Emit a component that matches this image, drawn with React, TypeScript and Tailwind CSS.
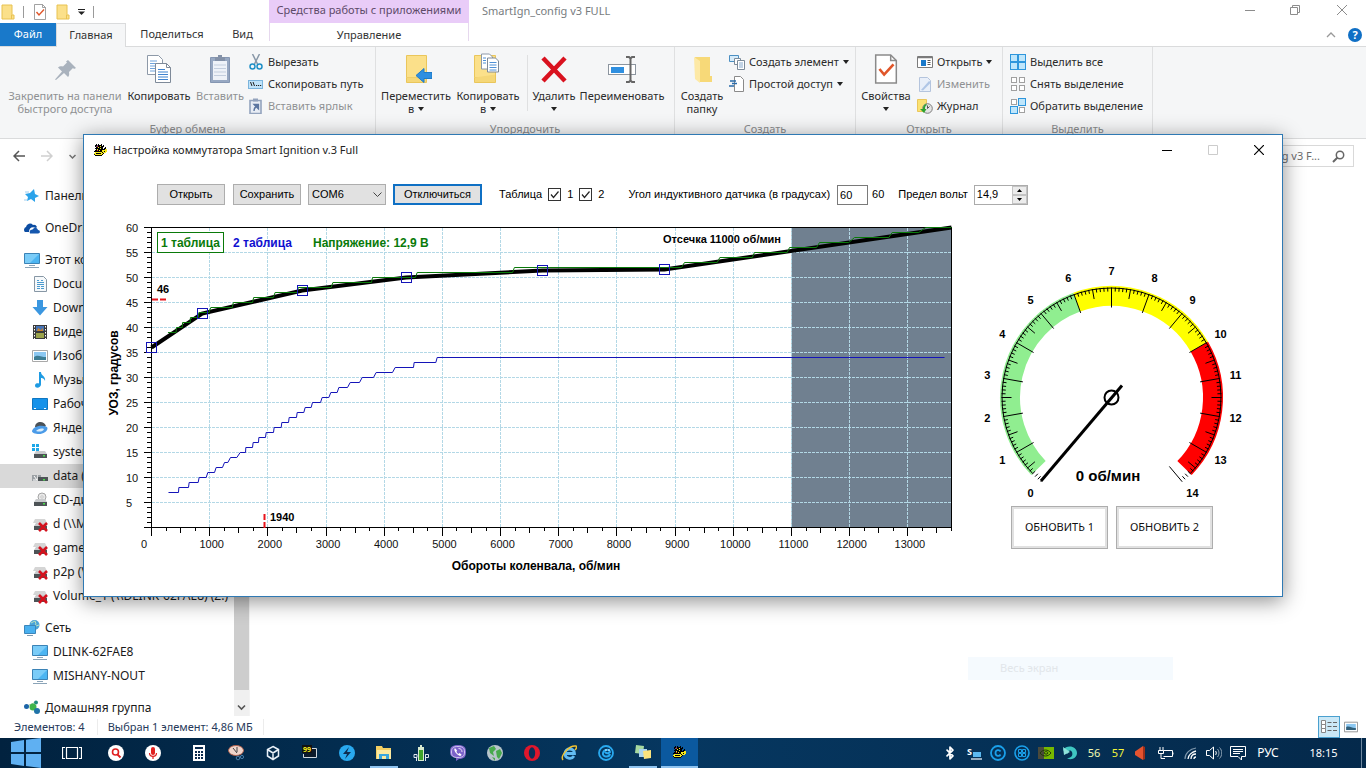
import React from 'react';
import { Bluetooth } from 'lucide-react';

type Point = [number, number];
// [degrees, rpm from, rpm to]
type Step = [number, number, number];

const curve: Point[] = [
  [0, 36], [870, 42.8], [2590, 47.4], [4375, 50], [6720, 51.4], [8815, 51.6], [13750, 60],
];

const tableOne: Step[] = [
  [39, 283, 423], [40, 428, 528], [41, 534, 663], [42, 670, 804], [43, 814, 988], [44, 1019, 1388],
  [45, 1406, 1737], [46, 1756, 2094], [47, 2124, 2504], [48, 2523, 3088], [49, 3118, 3781],
  [50, 3799, 4536], [51, 4566, 6206], [52, 6237, 9110], [53, 9161, 9723], [54, 9768, 10325],
  [55, 10364, 10926], [56, 10966, 11430], [57, 11482, 11985], [58, 12083, 12673],
  [59, 12731, 13188], [60, 13303, 13750],
];

const tableTwo: Step[] = [
  [7, 292, 464], [8, 470, 636], [9, 647, 802], [10, 819, 940], [11, 968, 1083], [12, 1111, 1220],
  [13, 1255, 1312], [14, 1358, 1467], [15, 1524, 1616], [16, 1621, 1736], [17, 1747, 1839],
  [18, 1845, 1959], [19, 1971, 2097], [20, 2108, 2229], [21, 2240, 2355], [22, 2366, 2492],
  [23, 2504, 2618], [24, 2641, 2744], [25, 2767, 2905], [26, 2933, 3048], [27, 3082, 3191],
  [28, 3220, 3369], [29, 3415, 3575], [30, 3621, 3816], [31, 3861, 4142], [32, 4188, 4503],
  [33, 4514, 4887], [34, 4910, 13630],
];

const px = (rpm: number) => 67.5 + (rpm * 800) / 13750;
const py = (deg: number) => 307.5 - deg * 5;
const toPoints = (pts: Point[]) => pts.map(([x, y]) => `${px(x)},${py(y)}`).join(' ');
const stepPoints = (steps: Step[]) =>
  toPoints(steps.flatMap(([d, a, b]): Point[] => [[a, d], [b, d]]));

const range = (n: number) => Array.from({ length: n }, (_, i) => i);

/* ---------- Icons ---------- */

type IconProps = { size?: number; box?: string; children: React.ReactNode; className?: string };

function Svg({ size = 16, box = '0 0 16 16', children, className = '' }: IconProps) {
  return (
    <svg width={size} height={size} viewBox={box} fill="none" className={`shrink-0 ${className}`} aria-hidden="true">
      {children}
    </svg>
  );
}

const enginePixels = [
  '..k.k..k.....',
  '.kkbkkkk.k...',
  '.kbrkkykkk...',
  '..kkykkkk..k.',
  '.kkkkkykk.kk.',
  '..kykkkkkkkyy',
  '.kkrkykkyyyyy',
  'kkkkkkkkyykyy',
  '.yyyyyyykyyy.',
  'yykkkkkyyk...',
  'kyyyyyyyk....',
  '.kkkkkkk.....',
];
const pixelColors: Record<string, string> = { k: '#000', y: '#f7ea1c', r: '#c33', b: '#5a4a80' };

function EngineIcon() {
  return (
    <Svg size={13} box="0 0 13 13">
      {enginePixels.map((row, y) =>
        row.split('').map((c, x) =>
          c === '.' ? null : <rect key={`${x}-${y}`} x={x} y={y} width="1" height="1" fill={pixelColors[c]} />,
        ),
      )}
    </Svg>
  );
}

function FolderIcon({ size = 16 }: { size?: number }) {
  return (
    <Svg size={size}>
      <path d="M2 1h10v10h2v4H2z" fill="#fbe08a" stroke="#e8c251" />
      <path d="M11.5 11v4" stroke="#e8c251" />
    </Svg>
  );
}

function CheckSheetIcon({ size = 16 }: { size?: number }) {
  return (
    <Svg size={size}>
      <path d="M2.5.5h8l3 3v12h-11z" fill="#fff" stroke="#8a8a8a" strokeWidth=".8" />
      <path d="M10.5.5v3h3" stroke="#8a8a8a" strokeWidth=".8" />
      <path d="M4.5 8l2.500 3 5-5.500" stroke="#e0562a" strokeWidth="1.400" />
    </Svg>
  );
}

function PinIcon() {
  return (
    <Svg size={28} box="0 0 28 28">
      <path d="M17 5l8 8-2 1-1-1-4 4c.5 3 0 4-1 5l-4-4-8 7-1-.5 7-8-4-4c1-1 3-1.500 5-1l4-4-1-1z" fill="#a9b2bd" />
    </Svg>
  );
}

function SheetsIcon({ size = 32 }: { size?: number }) {
  return (
    <Svg size={size} box="0 0 32 32">
      <path d="M4.500 2.500h11l4 4v15h-15z" fill="#fff" stroke="#8d99a8" />
      <path d="M7 8h7M7 10.500h9M7 13h9M7 15.500h9M7 18h9" stroke="#6ea3dc" />
      <path d="M12.500 10.500h11l4 4v15h-15z" fill="#fff" stroke="#7e8a99" />
      <path d="M23.500 10.500v4h4" stroke="#7e8a99" />
      <path d="M15 16.500h7M15 19h10M15 21.500h10M15 24h10M15 26.500h10" stroke="#3f83cf" />
    </Svg>
  );
}

function ClipboardIcon() {
  return (
    <Svg size={32} box="0 0 32 32">
      <path d="M6.500 4.500h19v25h-19z" fill="#97a8c2" stroke="#8596b2" />
      <path d="M9 8h14v19H9z" fill="#eef2f8" />
      <path d="M10 12h12M10 15.500h12M10 19h12M10 22.500h12" stroke="#c3cede" />
      <path d="M11 4h3V2h4v2h3v4H11z" fill="#8391a8" />
    </Svg>
  );
}

function ScissorsIcon() {
  return (
    <Svg>
      <path d="M4.500 0l5 10M11.500 0l-5 10" stroke="#8998a8" strokeWidth="1.500" />
      <circle cx="4.500" cy="12.500" r="2.500" stroke="#1f8fc6" strokeWidth="1.500" />
      <circle cx="11.500" cy="12.500" r="2.500" stroke="#1f8fc6" strokeWidth="1.500" />
    </Svg>
  );
}

function PathIcon() {
  return (
    <Svg>
      <rect x=".5" y="4.500" width="14" height="8" fill="#bfe3fa" stroke="#7bb4dc" />
      <path d="M2.500 6l1.500 4M5 6l1.500 4M8 9.500h1.200M10 9.500h1.200M12 9.500h1.200" stroke="#222" />
    </Svg>
  );
}

function ShortcutIcon() {
  return (
    <Svg>
      <path d="M2 2.500h11v13H2z" fill="#e8edf5" stroke="#93a3bd" strokeWidth="1.600" />
      <path d="M5 .5h5v3H5z" fill="#93a3bd" />
      <path d="M6 6.500h4.500v4.500zM9 8c-2.500 1-3 2.500-3 5" fill="#5c76a0" stroke="#5c76a0" strokeWidth="1.300" />
    </Svg>
  );
}

function MoveToIcon() {
  return (
    <Svg size={32} box="0 0 32 32">
      <path d="M6.500 2.500h20v22h-20z" fill="#fbe08a" stroke="#eac65b" />
      <path d="M6.500 24.500v5h20v-5" fill="#f5d778" stroke="#eac65b" />
      <path d="M16 22.500l8-7v4h8v6h-8v4z" fill="#2f8fe0" stroke="#1f7bc8" />
    </Svg>
  );
}

function CopyToIcon() {
  return (
    <Svg size={32} box="0 0 32 32">
      <path d="M2.500 2.500h21v22h-21z" fill="#fbe08a" stroke="#eac65b" />
      <path d="M2.500 24.500v5h21v-8" fill="#f5d778" stroke="#eac65b" />
      <path d="M9.500 1h8l3 3v12h-11z" fill="#fff" stroke="#8d99a8" />
      <path d="M15.500 5h8l3 3v11h-11z" fill="#fff" stroke="#7e8a99" />
      <path d="M11 5h3M11 7.500h3M11 10h3M17.500 9.500h7M17.500 12h7M17.500 14.500h7M17.500 17h7" stroke="#4e90d6" />
    </Svg>
  );
}

function DeleteIcon() {
  return (
    <Svg size={32} box="0 0 32 32">
      <path d="M5 5l22 23M27 5L5 28" stroke="#d9121f" strokeWidth="4.500" />
    </Svg>
  );
}

function RenameIcon() {
  return (
    <Svg size={32} box="0 0 32 32">
      <rect x="2.500" y="11.500" width="27" height="10" fill="#fff" stroke="#8c959f" />
      <path d="M5 14h13v6H5z" fill="#2f8fe0" />
      <path d="M20 4h3l1.500 1.500L26 4h3M24.500 5v23M20 29h3l1.500-1.500L26 29h3" stroke="#666" strokeWidth="2" />
    </Svg>
  );
}

function NewFolderIcon() {
  return (
    <Svg size={32} box="0 0 32 32">
      <path d="M9 4h15v19h2v6H13z" fill="#f7d978" />
      <path d="M8 4l6 4v22l-5-4z" fill="#fde9a6" />
    </Svg>
  );
}

function NewItemIcon() {
  return (
    <Svg>
      <path d="M.5 1.500h9v6h-9z" fill="#d7ecfa" stroke="#4b8fc2" />
      <path d="M5.500 4.500h6v6h-6z" fill="#fff" stroke="#7d8b99" />
      <path d="M8.500 6.500h7v9h-7z" fill="#fff" stroke="#7d8b99" />
      <path d="M10 9h4M10 11h4M10 13h4" stroke="#86a9cc" />
    </Svg>
  );
}

function EasyAccessIcon() {
  return (
    <Svg>
      <path d="M5.5.5h6l3 3v12h-9z" fill="#fff" stroke="#8a8a8a" />
      <path d="M1 5h6M3 7.500h5M0 10h5" stroke="#2b6cab" strokeWidth="1.300" />
    </Svg>
  );
}

function OpenIcon() {
  return (
    <Svg>
      <path d="M.5 2.500h15v11H.5z" fill="#fff" stroke="#7b7b7b" />
      <path d="M1 3.500h14" stroke="#7b7b7b" strokeWidth="1.500" />
      <path d="M4 6h5v6H4z" fill="#1979ca" />
      <path d="M10.500 6.500h3M10.500 8.500h3M10.500 10.500h3" stroke="#555" />
    </Svg>
  );
}

function EditIcon() {
  return (
    <Svg>
      <path d="M2.500 1.500h8l3 3v11h-11z" fill="#e9eff9" stroke="#b4c4dd" />
      <path d="M4 14l8-9 2 1.500-8 8z" fill="#b0c6e6" />
    </Svg>
  );
}

function HistoryIcon() {
  return (
    <Svg>
      <path d="M.5 1.500h9v12h-9z" fill="#fbe272" stroke="#eac65b" />
      <circle cx="10.500" cy="10.500" r="4.800" fill="#e4e4e4" stroke="#7e7e7e" />
      <path d="M10.500 7.500v3l2-2" stroke="#555" />
      <path d="M9 6a5 5 0 0 0-3 5H3l4 4 2.500-4H8c0-2 0-3 2-4z" fill="#2fa32f" />
    </Svg>
  );
}

function SquaresIcon({ filled }: { filled: boolean[] }) {
  return (
    <Svg>
      {filled.map((on, i) => (
        <rect
          key={i}
          x={(i % 2) * 8 + (on ? 0.5 : 1.5)}
          y={Math.floor(i / 2) * 8 + (on ? 0.5 : 1.5)}
          width={on ? 7 : 5}
          height={on ? 7 : 5}
          fill={on ? '#bfe6fb' : '#fff'}
          stroke={on ? '#2e96dc' : '#a0a0a0'}
        />
      ))}
    </Svg>
  );
}

function MonitorIcon() {
  return (
    <Svg>
      <path d="M.5 1.500h15v10H.5z" fill="#4cb5f2" stroke="#3b83b6" />
      <path d="M1 2h14L6 11H1z" fill="#7accf8" />
      <path d="M5 13.500h6M1 15.500h14" stroke="#8ba4b8" />
    </Svg>
  );
}

function DriveIcon({ kind }: { kind: 'system' | 'data' | 'cd' | 'net' }) {
  return (
    <Svg>
      {kind === 'cd' && <circle cx="10" cy="5" r="4" fill="#e9e9e9" stroke="#a5a5a5" />}
      {kind === 'cd' && <circle cx="10" cy="5" r="1.200" fill="#fff" stroke="#a5a5a5" strokeWidth=".6" />}
      {kind === 'system' && <path d="M0 0h3v3H0zM4 0h3v3H4zM0 4h3v3H0zM4 4h3v3H4z" fill="#1ca7e8" />}
      {kind === 'net' && <path d="M3 3h10l2 4H1z" fill="#d5d5d5" />}
      {kind !== 'data' && <path d="M4 7h9l2 3H2z" fill="#c9cbcd" />}
      {kind !== 'data' && <path d="M2 10h13v4H2z" fill="#4d5356" />}
      {kind === 'data' && <path d="M6 9h10v4H6z" fill="#4d5356" />}
      {kind === 'data' && <path d="M0 7h5v6H0zM6 7h3v2H6z" fill="#9ba0a4" />}
      {kind === 'data' && <path d="M2 8l3 4M1 12h4" stroke="#fff" />}
      <rect x="11" y="11" width="2" height="1.500" fill="#4be04b" />
      {kind === 'net' && <path d="M7 7l8 8M15 7l-8 8" stroke="#d4121e" strokeWidth="2.600" />}
    </Svg>
  );
}

const navIcons: Record<string, React.ReactNode> = {
  star: (
    <Svg>
      <path d="M10 1l1 5 4 2-4 2v4l-4-3-4 2 1-4-3-3 5-1z" fill="#2ba3ea" />
      <path d="M1 4h4M0 12h3" stroke="#9ecdf0" />
    </Svg>
  ),
  onedrive: (
    <Svg>
      <path d="M1 12a3 3 0 0 1 1-5 4 4 0 0 1 7-2 3.500 3.500 0 0 1 4 2l-1 1c-4-2-7 0-7 4z" fill="#0c4da2" />
      <path d="M6 13.500c-1-3 1-4 2.500-4 2-3 5-2 5.500.5 2.500 0 2.500 3.500 0 3.500z" fill="#1557ae" />
    </Svg>
  ),
  monitor: <MonitorIcon />,
  docs: (
    <Svg>
      <path d="M2.5.5h9l3 3v12h-12z" fill="#f6f9fb" stroke="#8797a5" />
      <path d="M5 4.500h2M9 4.500h2M5 6.500h7M5 8.500h7M5 10.500h3M9 10.500h3M5 12.500h3M9 12.500h3" stroke="#4b9bd0" />
    </Svg>
  ),
  down: (
    <Svg>
      <path d="M5 0h6v7h4.500L8 15.500.5 7H5z" fill="#3b97e0" />
    </Svg>
  ),
  video: (
    <Svg>
      <path d="M1 1h14v14H1z" fill="#3a3a3a" />
      <path d="M4 2h8v5H4z" fill="#4673b5" />
      <path d="M4 9h8v5H4z" fill="#9aa24a" />
      <path d="M6 4l3 2 2-2v3H5z" fill="#c7822e" />
      <path d="M2.500 2v13M13.500 2v13" stroke="#fff" strokeDasharray="1.500 1.500" />
    </Svg>
  ),
  image: (
    <Svg>
      <path d="M.5 2.500h15v11H.5z" fill="#fff" stroke="#a9a9a9" />
      <path d="M2 4h12v8H2z" fill="#8cc8f2" />
      <path d="M2 9c4-3 7 0 12 0v3H2z" fill="#3d7d94" />
    </Svg>
  ),
  music: (
    <Svg>
      <path d="M7 0h2c0 4 5 4 4 9-1-3-3-3-4-3v6.500C9 16 3 17 3 13.500 3 11 6 11 7 11.500z" fill="#1e9be3" />
    </Svg>
  ),
  desktop: (
    <Svg>
      <path d="M.5 2.500h15v11H.5z" fill="#1592ea" stroke="#0f76c1" />
      <path d="M2 12.500h2M12 12.500h2" stroke="#fff" />
    </Svg>
  ),
  yandex: (
    <Svg>
      <path d="M3 7c0-6 9-7 11-1l-4 3z" fill="#4b5258" />
      <path d="M0 11c1-4 8-7 15-4 2 3-3 7-8 7-4 0-7-1-7-3z" fill="#4b9be8" />
      <path d="M4 11c2-2 5-3 8-2-1 3-5 3-8 2z" fill="#dceefb" />
    </Svg>
  ),
  system: <DriveIcon kind="system" />,
  data: <DriveIcon kind="data" />,
  cd: <DriveIcon kind="cd" />,
  net: <DriveIcon kind="net" />,
  network: (
    <Svg>
      <circle cx="10.500" cy="5" r="5" fill="#4aa3d8" />
      <path d="M7 3l4-2 1 3-2 3M12 6l3-1" stroke="#b9e0c0" />
      <path d="M.5 5.500h11v8H.5z" fill="#49b0ef" stroke="#3c86bb" />
      <path d="M3 15.500h6" stroke="#7f9aaf" />
    </Svg>
  ),
  homegroup: (
    <Svg>
      <path d="M3 6l9-4M8 7l5 4" stroke="#9ec9a4" />
      <circle cx="2.500" cy="6.500" r="2.500" fill="#1c64a8" />
      <circle cx="12" cy="2.500" r="2" fill="#1f8a7c" />
      <circle cx="9" cy="7" r="3.500" fill="#3fb54a" />
      <circle cx="13" cy="11" r="3" fill="#1f73a8" />
    </Svg>
  ),
};

/* ---------- Explorer ---------- */

function Caret() {
  return (
    <svg width="6" height="4" viewBox="0 0 6 4" className="inline-block shrink-0 align-middle" aria-hidden="true">
      <path d="M0 0h6L3 4z" fill="#222" />
    </svg>
  );
}

type RibbonProps = { icon: React.ReactNode; label: string; second?: string; caret?: boolean; muted?: boolean; width: string };

function BigButton({ icon, label, second, caret, muted, width }: RibbonProps) {
  return (
    <button className={`flex shrink-0 flex-col items-center text-center leading-[13px] ${muted ? 'text-[#8f9193]' : 'text-[#2b2b2b]'} ${width}`}>
      <span className="mb-[3px] flex h-[35px] items-center">{icon}</span>
      <span className="whitespace-nowrap">{label}</span>
      <span className="flex h-[13px] items-center gap-1 whitespace-nowrap">
        {second}
        {caret && <Caret />}
      </span>
    </button>
  );
}

function SmallButton({ icon, label, caret, muted }: { icon: React.ReactNode; label: string; caret?: boolean; muted?: boolean }) {
  return (
    <button className={`flex h-[22px] items-center gap-1 whitespace-nowrap ${muted ? 'text-[#8f9193]' : 'text-[#2b2b2b]'}`}>
      {icon}
      <span>{label}</span>
      {caret && <Caret />}
    </button>
  );
}

function Group({ title, width, children }: { title: string; width: string; children: React.ReactNode }) {
  return (
    <div className={`flex shrink-0 flex-col border-r border-[#dfe0e1] ${width}`}>
      <div className="flex h-[74px] pt-1">{children}</div>
      <div className="text-center leading-4 text-[#8a8c8e]">{title}</div>
    </div>
  );
}

function TitleBar() {
  return (
    <div className="flex h-[23px] shrink-0">
      <div className="flex w-[269px] shrink-0 items-center">
        <FolderIcon />
        <span className="ml-[7px] h-3 w-px bg-[#9a9a9a]" />
        <span className="ml-2"><CheckSheetIcon /></span>
        <span className="ml-[7px]"><FolderIcon /></span>
        <svg width="7" height="6" viewBox="0 0 7 6" className="ml-[7px]" aria-hidden="true">
          <path d="M0 .5h7" stroke="#222" />
          <path d="M0 2.500h7L3.500 6z" fill="#222" />
        </svg>
        <span className="ml-2 h-3 w-px bg-[#9a9a9a]" />
      </div>
      <div className="flex w-[200px] shrink-0 items-center justify-center whitespace-nowrap bg-[#e9ccf8] pb-[2px] text-[#5d4a68]">
        Средства работы с приложениями
      </div>
      <div className="flex flex-1 items-center pl-[13px] text-[#777c80]">SmartIgn_config v3 FULL</div>
      <div className="flex pb-1 text-[#8c8c8c]">
        <button aria-label="Свернуть" className="flex w-[45px] items-center justify-center">
          <Svg size={10} box="0 0 10 10"><path d="M0 5.500h10" stroke="currentColor" /></Svg>
        </button>
        <button aria-label="Развернуть" className="flex w-[46px] items-center justify-center">
          <Svg size={10} box="0 0 10 10"><path d="M.5 2.500h7v7h-7zM2.500 2.500v-2h7v7h-2" stroke="currentColor" /></Svg>
        </button>
        <button aria-label="Закрыть" className="flex w-12 items-center justify-center">
          <Svg size={10} box="0 0 10 10"><path d="M0 0l10 10M10 0L0 10" stroke="currentColor" /></Svg>
        </button>
      </div>
    </div>
  );
}

function TabRow() {
  return (
    <div className="flex h-6 shrink-0 border-b border-[#dadbdc] text-[#333]">
      <button className="h-[23px] w-14 shrink-0 bg-[#1979ca] text-white">Файл</button>
      <button className="h-6 w-[70px] shrink-0 border border-b-0 border-[#dadbdc] bg-[#f5f6f7]">Главная</button>
      <button className="w-[92px] shrink-0">Поделиться</button>
      <button className="mr-[2px] w-[49px] shrink-0">Вид</button>
      <button className="h-[18px] w-[200px] shrink-0 border-x border-[#e6d8ee] pt-1 leading-4">Управление</button>
      <div className="ml-auto flex items-center gap-3 pr-1">
        <Svg size={10} box="0 0 10 10"><path d="M1 7l4-4 4 4" stroke="#999" strokeWidth="1.300" /></Svg>
        <button aria-label="Справка" className="flex h-[14px] w-[14px] items-center justify-center rounded-full bg-[#0f6fc5] font-bold leading-none text-white">?</button>
      </div>
    </div>
  );
}

function Ribbon() {
  return (
    <div className="flex h-[92px] shrink-0 overflow-hidden border-b border-[#dadbdc] bg-[#f5f6f7]">
      <Group title="Буфер обмена" width="w-[376px]">
        <BigButton width="ml-[6px] w-[118px]" muted icon={<PinIcon />} label="Закрепить на панели" second="быстрого доступа" />
        <BigButton width="w-[70px]" icon={<SheetsIcon />} label="Копировать" />
        <BigButton width="w-[52px]" muted icon={<ClipboardIcon />} label="Вставить" />
        <div className="ml-[2px]">
          <SmallButton icon={<ScissorsIcon />} label="Вырезать" />
          <SmallButton icon={<PathIcon />} label="Скопировать путь" />
          <SmallButton muted icon={<ShortcutIcon />} label="Вставить ярлык" />
        </div>
      </Group>
      <Group title="Упорядочить" width="w-[299px]">
        <BigButton width="ml-1 w-[72px]" icon={<MoveToIcon />} label="Переместить" second="в" caret />
        <BigButton width="w-[72px]" icon={<CopyToIcon />} label="Копировать" second="в" caret />
        <span className="ml-[3px] mt-1 h-14 w-px bg-[#dfe0e1]" />
        <BigButton width="ml-px w-[50px]" icon={<DeleteIcon />} label="Удалить" caret />
        <BigButton width="w-[86px]" icon={<RenameIcon />} label="Переименовать" />
      </Group>
      <Group title="Создать" width="w-[181px]">
        <BigButton width="ml-px w-[52px]" icon={<NewFolderIcon />} label="Создать" second="папку" />
        <div className="ml-px">
          <SmallButton icon={<NewItemIcon />} label="Создать элемент" caret />
          <SmallButton icon={<EasyAccessIcon />} label="Простой доступ" caret />
        </div>
      </Group>
      <Group title="Открыть" width="w-[147px]">
        <BigButton width="ml-1 w-[52px]" icon={<CheckSheetIcon size={30} />} label="Свойства" caret />
        <div className="ml-[5px]">
          <SmallButton icon={<OpenIcon />} label="Открыть" caret />
          <SmallButton muted icon={<EditIcon />} label="Изменить" />
          <SmallButton icon={<HistoryIcon />} label="Журнал" />
        </div>
      </Group>
      <Group title="Выделить" width="w-[150px]">
        <div className="ml-[7px]">
          <SmallButton icon={<SquaresIcon filled={[true, true, true, true]} />} label="Выделить все" />
          <SmallButton icon={<SquaresIcon filled={[false, false, false, false]} />} label="Снять выделение" />
          <SmallButton icon={<SquaresIcon filled={[false, true, true, false]} />} label="Обратить выделение" />
        </div>
      </Group>
    </div>
  );
}

function AddressRow() {
  return (
    <div className="flex h-[37px] shrink-0 items-center pb-[3px] pl-[13px] pr-3">
      <button aria-label="Назад">
        <Svg size={12} box="0 0 12 12"><path d="M12 6H1M6 1L1 6l5 5" stroke="#555" strokeWidth="1.500" /></Svg>
      </button>
      <button aria-label="Вперед" className="ml-4">
        <Svg size={12} box="0 0 12 12"><path d="M0 6h11M6 1l5 5-5 5" stroke="#d0d0d0" strokeWidth="1.500" /></Svg>
      </button>
      <button aria-label="Последние расположения" className="ml-4">
        <Svg size={7} box="0 0 7 7"><path d="M.5 2l3 3 3-3" stroke="#777" strokeWidth="1.500" /></Svg>
      </button>
      <label className="ml-auto flex h-[22px] w-[240px] items-center gap-3 border border-[#d9d9d9] px-2 text-[#6d6d6d]">
        <input type="text" aria-label="Поиск" defaultValue="Поиск: SmartIgn_config v3 F..." className="min-w-0 flex-1 text-right outline-none" />
        <Svg size={13} box="0 0 13 13">
          <circle cx="8" cy="5" r="3.700" stroke="#666" strokeWidth="1.500" />
          <path d="M5.500 7.500L1 12" stroke="#666" strokeWidth="2" />
        </Svg>
      </label>
    </div>
  );
}

type NavEntry = { icon: string; label: string; selected?: boolean };
const navSections: { head: NavEntry; items: NavEntry[] }[] = [
  { head: { icon: 'star', label: 'Панель быстрого доступа' }, items: [] },
  { head: { icon: 'onedrive', label: 'OneDrive' }, items: [] },
  {
    head: { icon: 'monitor', label: 'Этот компьютер' },
    items: [
      { icon: 'docs', label: 'Documents' },
      { icon: 'down', label: 'Downloads' },
      { icon: 'video', label: 'Видео' },
      { icon: 'image', label: 'Изображения' },
      { icon: 'music', label: 'Музыка' },
      { icon: 'desktop', label: 'Рабочий стол' },
      { icon: 'yandex', label: 'Яндекс.Диск' },
      { icon: 'system', label: 'system (C:)' },
      { icon: 'data', label: 'data (D:)', selected: true },
      { icon: 'cd', label: 'CD-дисковод' },
      { icon: 'net', label: 'd (\\\\Mishany)' },
      { icon: 'net', label: 'games (X:)' },
      { icon: 'net', label: 'p2p (\\\\Mishany)' },
      { icon: 'net', label: 'Volume_1 (\\\\DLINK-62FAE8) (Z:)' },
    ],
  },
  {
    head: { icon: 'network', label: 'Сеть' },
    items: [
      { icon: 'monitor', label: 'DLINK-62FAE8' },
      { icon: 'monitor', label: 'MISHANY-NOUT' },
    ],
  },
  { head: { icon: 'homegroup', label: 'Домашняя группа' }, items: [] },
];

function NavRow({ entry, indent }: { entry: NavEntry; indent: string }) {
  return (
    <li className={`flex h-6 shrink-0 items-center gap-[5px] whitespace-nowrap ${indent} ${entry.selected ? 'bg-[#d9d9d9]' : ''}`}>
      {navIcons[entry.icon]}
      {entry.label}
    </li>
  );
}

function Sidebar() {
  return (
    <nav className="flex w-[250px] shrink-0 border-r border-[#f3f3f3] text-[12px] text-[#1a1a1a]">
      <div className="flex min-w-0 flex-1 flex-col gap-2 overflow-hidden pt-2">
        {navSections.map((s) => (
          <ul key={s.head.label} className="shrink-0">
            <NavRow entry={s.head} indent="pl-6" />
            {s.items.map((item) => (
              <NavRow key={item.label} entry={item} indent="pl-8" />
            ))}
          </ul>
        ))}
      </div>
      <div className="flex w-[15px] shrink-0 flex-col bg-[#f0f0f0]">
        <div className="flex-1 bg-[#cdcdcd]" />
        <button aria-label="Вниз" className="flex h-[26px] items-center justify-center pt-2">
          <Svg size={9} box="0 0 9 9"><path d="M1 2.500l3.500 3.500L8 2.500" stroke="#555" strokeWidth="1.600" /></Svg>
        </button>
      </div>
    </nav>
  );
}

function StatusBar() {
  return (
    <div className="flex h-[22px] shrink-0 items-center pl-[14px] text-[#26395a]">
      <span className="border-r border-[#ececec] pr-3">Элементов: 4</span>
      <span className="border-r border-[#ececec] px-[10px]">Выбран 1 элемент: 4,86 МБ</span>
      <div className="ml-auto flex items-center gap-1 pr-2">
        <button aria-label="Таблица" className="flex h-[22px] w-[22px] items-center justify-center border border-[#4aa0cf] bg-[#cbe8f6]">
          <Svg>
            <path d="M.5 1.500h4v4h-4zM.5 5.500h4v4h-4zM.5 9.500h4v4h-4z" fill="#fff" stroke="#888" />
            <path d="M6.500 3.500h4M12 3.500h4M6.500 7.500h4M12 7.500h4M6.500 11.500h4M12 11.500h4" stroke="#666" />
          </Svg>
        </button>
        <button aria-label="Крупные значки">
          <Svg size={14}>
            <path d="M.5 2.500h15v11H.5z" fill="#fff" stroke="#8a8a8a" />
            <path d="M2.500 4.500h11v7h-11z" fill="#8cc8f2" />
            <path d="M2.500 8c4-2 7 2 11 1v2.500h-11z" fill="#32607a" />
          </Svg>
        </button>
      </div>
    </div>
  );
}

/* ---------- Ignition window ---------- */

function TickBox({ label }: { label: string }) {
  return (
    <label className="flex items-center gap-[6px]">
      <span className="relative flex h-[13px] w-[13px]">
        <input type="checkbox" defaultChecked className="h-[13px] w-[13px] appearance-none border border-[#333] bg-white" />
        <svg viewBox="0 0 13 13" className="pointer-events-none absolute inset-0" fill="none" aria-hidden="true">
          <path d="M3 6.500l2.500 3L10.500 3.500" stroke="#222" strokeWidth="1.200" />
        </svg>
      </span>
      {label}
    </label>
  );
}

function Toolbar() {
  return (
    <div className="flex h-[55px] items-center whitespace-nowrap pl-[73px] pt-1 font-['Liberation_Sans',Arial,sans-serif] text-[11px] text-black">
      <button className="h-[21px] w-[68px] border border-[#adadad] bg-[#e1e1e1]">Открыть</button>
      <button className="ml-2 h-[21px] w-[68px] border border-[#adadad] bg-[#e1e1e1]">Сохранить</button>
      <div className="relative ml-[7px]">
        <select aria-label="Порт" className="h-[21px] w-[78px] appearance-none border border-[#adadad] bg-[#e1e1e1] pl-[3px]">
          <option>COM6</option>
        </select>
        <svg width="9" height="6" viewBox="0 0 9 6" fill="none" className="pointer-events-none absolute right-1 top-2" aria-hidden="true">
          <path d="M.5.5l4 4 4-4" stroke="#444" />
        </svg>
      </div>
      <button className="ml-[7px] h-[21px] w-[89px] border-2 border-[#0f70c4] bg-[#e1e1e1]">Отключиться</button>
      <span className="ml-[17px] mr-[6px]">Таблица</span>
      <TickBox label="1" />
      <span className="w-[6px]" />
      <TickBox label="2" />
      <label className="ml-6 flex items-center gap-[7px]">
        Угол индуктивного датчика (в градусах)
        <input type="text" defaultValue="60" className="h-5 w-[31px] border border-[#7a7a7a] pl-[2px]" />
      </label>
      <span className="ml-1">60</span>
      <label className="ml-[14px] flex items-center gap-[6px]">
        Предел вольт
        <span className="flex h-5 w-[54px] border border-[#ababab]">
          <input type="text" defaultValue="14,9" className="min-w-0 flex-1 pl-[2px] outline-none" />
          <span className="flex w-[15px] flex-col">
            <button aria-label="Больше" className="flex flex-1 items-center justify-center border border-[#c4c4c4] bg-[#ececec]">
              <svg width="5" height="3" viewBox="0 0 5 3"><path d="M0 3h5L2.500 0z" /></svg>
            </button>
            <button aria-label="Меньше" className="flex flex-1 items-center justify-center border border-[#c4c4c4] bg-[#ececec]">
              <svg width="5" height="3" viewBox="0 0 5 3"><path d="M0 0h5L2.500 3z" /></svg>
            </button>
          </span>
        </span>
      </label>
    </div>
  );
}

function Chart() {
  return (
    <svg viewBox="0 0 876 360" className="h-auto w-full font-['Liberation_Sans',Arial,sans-serif] text-[11px]" role="img" aria-label="УОЗ по оборотам коленвала">
      <rect x={px(11000)} y="7.500" width={px(13750) - px(11000)} height="300" fill="#708090" />

      {/* grid */}
      <g stroke="#b3d8e6" strokeDasharray="3 1" shapeRendering="crispEdges">
        {range(11).map((i) => (
          <line key={`h${i}`} x1="67.500" x2="867.500" y1={py(5 * i + 5)} y2={py(5 * i + 5)} />
        ))}
        {range(13).map((i) => (
          <line key={`v${i}`} y1="7.500" y2="307.500" x1={px(1000 * i + 1000)} x2={px(1000 * i + 1000)} />
        ))}
      </g>

      {/* axes and ticks */}
      <g stroke="#000" shapeRendering="crispEdges">
        <path d="M67.500 7.500h800v300h-800z" fill="none" />
        {range(61).map((i) => (
          <line key={`y${i}`} x1={i % 5 === 0 ? 59.5 : 62.5} x2="67.500" y1={py(i)} y2={py(i)} />
        ))}
        {range(56).map((i) => (
          <line key={`x${i}`} x1={px(i * 250)} x2={px(i * 250)} y1="307.500" y2={i % 4 === 0 ? 315.5 : i % 2 === 0 ? 312.5 : 310.5} />
        ))}
      </g>
      <g fill="#111">
        {range(12).map((i) => (
          <text key={i} x="42" y={py(5 * i + 5) + 4}>{5 * i + 5}</text>
        ))}
        <text x="60" y="328" textAnchor="middle">0</text>
        {range(13).map((i) => (
          <text key={i} x={px(1000 * i + 1000) + 2} y="328" textAnchor="middle">{1000 * i + 1000}</text>
        ))}
      </g>

      {/* curves */}
      <polyline points={toPoints(curve)} fill="none" stroke="#000" strokeWidth="4" />
      <polyline points={stepPoints(tableOne)} fill="none" stroke="#0a7a0a" />
      <polyline points={stepPoints(tableTwo)} fill="none" stroke="#1414b8" />
      {curve.slice(0, 6).map(([x, y]) => (
        <rect key={x} x={Math.floor(px(x)) - 4.5} y={Math.round(py(y)) - 5.5} width="10" height="10" fill="none" stroke="#1414b8" />
      ))}

      {/* cursor marks */}
      <path d="M68 79.500h14" stroke="#e8141c" strokeWidth="2" strokeDasharray="6 2" />
      <path d="M180.500 294v14" stroke="#e8141c" strokeWidth="2" strokeDasharray="6 2" />

      <g className="font-bold">
        <text x="73" y="73">46</text>
        <text x="186" y="301">1940</text>
        <text x="579" y="23">Отсечка 11000 об/мин</text>
        <rect x="73.500" y="12.500" width="66" height="20" fill="#fff" stroke="#0a7a0a" />
        <g className="text-[12px]">
          <text x="77" y="27" fill="#0a7a0a">1 таблица</text>
          <text x="149" y="27" fill="#0f0fd0">2 таблица</text>
          <text x="229" y="27" fill="#0a7a0a">Напряжение: 12,9 В</text>
          <text x="452" y="350" textAnchor="middle">Обороты коленвала, об/мин</text>
          <text transform="translate(34 153) rotate(-90)" textAnchor="middle">УОЗ, градусов</text>
        </g>
      </g>
    </svg>
  );
}

// dial centre, and a point on it for a value of 0..14 thousand rpm
const CX = 151.5;
const CY = 177.5;
function dial(value: number, r: number): Point {
  const a = ((value * 20 - 140) * Math.PI) / 180;
  return [CX + r * Math.sin(a), CY - r * Math.cos(a)];
}
function arc(from: number, to: number, r: number) {
  const [x1, y1] = dial(from, r);
  const [x2, y2] = dial(to, r);
  return `M${x1} ${y1}A${r} ${r} 0 ${(to - from) * 20 > 180 ? 1 : 0} 1 ${x2} ${y2}`;
}

function Gauge() {
  return (
    <svg viewBox="0 0 322 286" className="h-auto w-full font-['Liberation_Sans',Arial,sans-serif] text-[11px] font-bold" role="img" aria-label="Тахометр">
      <g fill="none" strokeWidth="20">
        <path d={arc(0.3, 6, 101.5)} stroke="#90ee90" />
        <path d={arc(6, 10, 101.5)} stroke="#ffff00" />
        <path d={arc(10, 13.7, 101.5)} stroke="#ff0000" />
      </g>
      <path d={arc(0.3, 13.7, 109.5)} fill="none" stroke="#000" />
      {range(141).map((i) => {
        const [x1, y1] = dial(i / 10, 110);
        const [x2, y2] = dial(i / 10, i % 10 === 0 ? 90 : i % 5 === 0 ? 100 : 106);
        return <line key={i} x1={x1} y1={y1} x2={x2} y2={y2} stroke="#000" strokeWidth="1" />;
      })}
      {range(15).map((i) => {
        const [x, y] = dial(i, 126);
        return <text key={i} x={x} y={y + 3} textAnchor="middle">{i}</text>;
      })}
      <path d="M81 261L162 165.500" stroke="#000" strokeWidth="3" />
      <circle cx={CX} cy={CY} r="7" fill="none" stroke="#000" strokeWidth="2" />
      <text x="148" y="261" textAnchor="middle" className="text-[15px]">0 об/мин</text>
    </svg>
  );
}

function IgnitionWindow() {
  return (
    <section className="absolute inset-x-[83px] top-[134px] border border-[#2f79b3] bg-white shadow-[0_4px_20px_rgba(0,0,0,0.45)]">
      <header className="flex h-[30px] items-center pl-[10px]">
        <EngineIcon />
        <h1 className="ml-[6px] flex-1 text-[11px] text-[#222]">Настройка коммутатора Smart Ignition v.3 Full</h1>
        <button aria-label="Свернуть" className="flex w-[46px] justify-center">
          <Svg size={10} box="0 0 10 10"><path d="M0 5.500h10" stroke="#000" /></Svg>
        </button>
        <button aria-label="Развернуть" disabled className="flex w-[46px] justify-center">
          <Svg size={10} box="0 0 10 10"><path d="M.5.5h9v9h-9z" stroke="#ccc" /></Svg>
        </button>
        <button aria-label="Закрыть" className="flex w-[46px] justify-center">
          <Svg size={10} box="0 0 10 10"><path d="M0 0l10 10M10 0L0 10" stroke="#000" strokeWidth="1.200" /></Svg>
        </button>
      </header>
      <Toolbar />
      <div className="flex items-start pb-4">
        <div className="min-w-0 flex-1">
          <Chart />
        </div>
        <div className="w-[322px] shrink-0">
          <Gauge />
          <div className="flex gap-2 pl-[51px] text-[11px] text-[#111]">
            {['ОБНОВИТЬ 1', 'ОБНОВИТЬ 2'].map((label) => (
              <button key={label} className="h-[43px] w-[97px] border border-[#adadad] bg-[#e1e1e1] p-[2px]">
                <span className="flex h-full items-center justify-center bg-white">{label}</span>
              </button>
            ))}
          </div>
        </div>
      </div>
    </section>
  );
}

/* ---------- Taskbar ---------- */

const pinned: { name: string; state?: string; icon: React.ReactNode }[] = [
  {
    name: 'Калькулятор',
    icon: (
      <Svg>
        <path d="M2 0h12v16H2z" fill="#fff" />
        <path d="M4 2h8v2H4zM4 6h2v2H4zM7 6h2v2H7zM10 6h2v2h-2zM4 9h2v2H4zM7 9h2v2H7zM10 9h2v2h-2zM4 12h2v2H4zM7 12h2v2H7zM10 12h2v2h-2z" fill="#0a2a4d" />
      </Svg>
    ),
  },
  {
    name: 'Ножницы',
    icon: (
      <Svg>
        <ellipse cx="8" cy="5.500" rx="7.500" ry="5" fill="#f0d5cb" stroke="#b3614b" />
        <path d="M5 3l4 5M9 2v5" stroke="#444" />
        <circle cx="10" cy="13" r="1.800" stroke="#4a7ea8" />
        <circle cx="14" cy="12" r="1.600" stroke="#4a7ea8" />
      </Svg>
    ),
  },
  {
    name: 'VirtualBox',
    icon: <Svg><path d="M8 1.500l5.500 3V11L8 14.500 2.500 11V4.500zM2.500 4.500L8 8l5.500-3.500M8 8v6.500" stroke="#e8f0f8" strokeWidth="1.500" /></Svg>,
  },
  {
    name: 'Частота кадров',
    icon: (
      <Svg>
        <path d="M3 3.500h11.500v9H1.500V9" fill="#0b1a2b" stroke="#cfd8e0" />
        <rect width="10" height="8" fill="#111" />
        <text x="1" y="7" fill="#f7f01c" className="text-[7px] font-bold">99</text>
      </Svg>
    ),
  },
  {
    name: 'DAEMON Tools',
    icon: <Svg><circle cx="8" cy="8" r="8" fill="#29a9ef" /><path d="M10 2L4 9h4l-2 5 6-7H8z" fill="#0d2c50" /></Svg>,
  },
  {
    name: 'Проводник',
    state: 'border-b-2 border-[#8fc3ef]',
    icon: (
      <Svg>
        <path d="M0 2h6l1 2h8v11H0z" fill="#f3cf63" />
        <path d="M1 6h14v9H1z" fill="#fbe9a0" />
        <path d="M3 15v-5h10v5h-3v-3H6v3z" fill="#3aa6dd" />
      </Svg>
    ),
  },
  {
    name: 'Батарея',
    icon: (
      <Svg>
        <path d="M5 2h6v14H5zM7 0h2v2H7z" fill="#d8ead0" />
        <path d="M6 5h4v10H6z" fill="#3fa52b" />
        <path d="M1 9.500h3v3H1zM3.500 12v4M12.500 9.500h3v3h-3zM12.500 9.500v6.500" stroke="#dfe6ee" />
      </Svg>
    ),
  },
  {
    name: 'Viber',
    icon: (
      <Svg>
        <path d="M8 0c6 0 8 2 8 7s-2 7-7 7l-3 2v-3C1 12 0 10 0 7c0-5 2-7 8-7z" fill="#7b62c9" />
        <path d="M8 1.500c5 0 6.500 1.500 6.500 5.500S13 12.500 8 12.500 1.500 11 1.500 7 3 1.500 8 1.500z" stroke="#e6e0fa" strokeWidth=".8" />
        <path d="M4.500 3.500c-1 2 2 6 5.500 7.500 1 0 1.500-1 1.500-1.500L9.500 8l-1 1C7.500 8.500 6.500 7.500 6.500 6.500l.5-1L5.500 3.500z" fill="#fff" />
        <path d="M8.500 3.500c2.500 0 3.500 1.500 3.500 3.500" stroke="#fff" strokeWidth=".8" />
      </Svg>
    ),
  },
  {
    name: 'Карта',
    icon: <Svg><circle cx="8" cy="8" r="8" fill="#b7c4cb" /><path d="M2 3l5-2 2 3-3 3 1 4-4-3zM9 6l4-2 2 4-3 6-2-2zM5 12l3 1v3z" fill="#47a94c" /></Svg>,
  },
  {
    name: 'Opera',
    icon: <Svg><ellipse cx="8" cy="8" rx="8" ry="8" fill="#e0172c" /><ellipse cx="8" cy="8" rx="3.200" ry="5.800" fill="#0b2f58" /></Svg>,
  },
  {
    name: 'Internet Explorer',
    icon: (
      <Svg>
        <path d="M13 11c-2.500 4-9 2.500-9-2.500 0-6 9.500-6 9.500 0H4" stroke="#63bdf2" strokeWidth="2.800" />
        <path d="M2 15C-1 11 8 0 15 1c1 1 0 3-1 4" stroke="#f2c230" strokeWidth="1.500" />
      </Svg>
    ),
  },
  {
    name: 'Спутник',
    icon: <Svg><circle cx="8" cy="8" r="7" stroke="#29a9ef" strokeWidth="1.800" /><path d="M12 9c-1 4-8 3-7-1s6-4 7-1c-2 2-4 1-5 0" stroke="#29a9ef" strokeWidth="2" /><circle cx="8" cy="5" r=".8" fill="#fff" /><circle cx="11" cy="5" r=".8" fill="#fff" /></Svg>,
  },
  {
    name: 'Заметки',
    state: 'border-b-2 border-[#8fc3ef]',
    icon: <Svg><path d="M1 1l8 1-1 8-8-1z" fill="#a7d9a0" /><path d="M4 5h8v8H4z" fill="#a9d4ee" /><path d="M8 7l8-1v8l-7 1z" fill="#fbe37d" /></Svg>,
  },
  { name: 'Smart Ignition', state: 'border-b-2 border-[#8fc3ef] bg-[#0b599f]', icon: <EngineIcon /> },
];

function TrayCell({ children }: { children: React.ReactNode }) {
  return <span className="flex w-6 shrink-0 items-center justify-center">{children}</span>;
}

function Taskbar() {
  return (
    <footer className="flex h-[30px] shrink-0 bg-gradient-to-r from-[#01223f] via-[#063760] to-[#04294b] text-[12px] text-white">
      <button aria-label="Пуск" className="flex w-[52px] shrink-0 items-center justify-center">
        <Svg size={30} box="0 0 30 30">
          <path d="M0 4l13-2v12H0zM15 1.700L30 0v14H15zM0 16h13v12L0 26zM15 16h15v14l-15-2z" fill="#5fb0f2" />
        </Svg>
      </button>
      <button aria-label="Представление задач" className="ml-px flex w-[37px] shrink-0 items-center justify-center">
        <Svg size={20} box="0 0 20 20"><path d="M4.500 4.500h11v11h-11zM3 4.500H.5v11H3M17 4.500h2.500v11H17" stroke="#fff" strokeWidth="1.200" /></Svg>
      </button>
      <button aria-label="Поиск" className="ml-[7px] flex w-[37px] shrink-0 items-center justify-center">
        <Svg><circle cx="8" cy="8" r="8" fill="#fff" /><circle cx="7.500" cy="7" r="3" stroke="#e02020" strokeWidth="1.600" /><path d="M9.500 9.500l3 3" stroke="#e02020" strokeWidth="2" /></Svg>
      </button>
      <button aria-label="Голосовой поиск" className="mr-[9px] flex w-[37px] shrink-0 items-center justify-center">
        <Svg><circle cx="8" cy="8" r="8" fill="#fff" /><rect x="6" y="2" width="4" height="8" rx="2" fill="#e02020" /><path d="M4.500 8c0 4.500 7 4.500 7 0M8 11v3" stroke="#e02020" strokeWidth="1.200" /></Svg>
      </button>
      {pinned.map((p) => (
        <button key={p.name} aria-label={p.name} className="flex w-[37px] shrink-0">
          <span className={`mx-auto flex h-full items-center justify-center ${p.name === 'Smart Ignition' ? 'w-full' : 'w-7'} ${p.state ?? ''}`}>{p.icon}</span>
        </button>
      ))}
      <div className="ml-auto flex">
        <TrayCell><Bluetooth size={14} strokeWidth={3} /></TrayCell>
        <TrayCell>
          <Svg>
            <text x="1" y="10" fill="#fff" className="text-[9px] font-bold">S</text>
            <path d="M7 7h8v5H7z" fill="#5cb8ef" />
            <path d="M5 14h11" stroke="#c9d5df" strokeWidth="1.500" />
          </Svg>
        </TrayCell>
        <TrayCell><Svg><circle cx="8" cy="8" r="7" stroke="#1aa0ea" strokeWidth="1.800" /><path d="M10.500 6.500c-1-2-5-2-5 1.500s4 3.500 5 1.500" stroke="#1aa0ea" strokeWidth="1.800" /></Svg></TrayCell>
        <TrayCell><Svg><circle cx="8" cy="8" r="7" stroke="#1aa0ea" strokeWidth="1.600" /><path d="M4.500 4.500h3v3h-3zM8.500 4.500h3v3h-3zM4.500 8.500h3v3h-3zM8.500 8.500h3v3h-3z" stroke="#1aa0ea" /></Svg></TrayCell>
        <TrayCell><Svg><path d="M0 2h16v12H0z" fill="#4a4a3c" /><path d="M6 2h10v12H6z" fill="#76b900" /><path d="M2 8c3-4 8-4 11 0-3 4-8 4-11 0zm4 0c1-2 3-2 4 0-1 2-3 1-4 0z" stroke="#243a08" /></Svg></TrayCell>
        <TrayCell><Svg><path d="M1 5C5-1 15 1 15 8c0 5-6 8-10 5 5 0 6-3 5-6C8 4 5 6 6 9z" fill="#3fc7c2" /><path d="M1 2l1 8 6-3z" fill="#8fe2da" /></Svg></TrayCell>
        <TrayCell><span className="text-[11px] text-[#f4fbb0]">56</span></TrayCell>
        <TrayCell><span className="text-[11px] text-[#f1f53a]">57</span></TrayCell>
        <TrayCell><Svg><path d="M1 6.500l8-5.500v14l-8-5z" fill="#e4532f" /><path d="M9 1l2 1v12l-2 1z" fill="#9c2f1a" /></Svg></TrayCell>
        <TrayCell><Svg><path d="M5.500 5.500h9v6h-9M15 7.500v2M2 2v3M5 2v3M.5 5.500h5v3h-5zM3 8.500v5h4" stroke="#fff" /></Svg></TrayCell>
        <TrayCell>
          <Svg>
            <path d="M3 14C3 8 8 4 14 3" stroke="#7f97ac" strokeWidth="1.200" />
            <path d="M6 14c0-4 4-7 8-8M9 14c0-3 2-5 5-5M12 14c0-1 1-2 2-2" stroke="#fff" strokeWidth="1.300" />
          </Svg>
        </TrayCell>
        <TrayCell>
          <Svg>
            <path d="M.5 5.500h3l4-3.500v12l-4-3.500h-3z" stroke="#fff" />
            <path d="M9.500 6c1 1 1 3 0 4" stroke="#fff" />
            <path d="M11.500 4c2 2 2 6 0 8M13.500 2.500c3 3 3 8 0 11" stroke="#8fa3b5" />
          </Svg>
        </TrayCell>
        <TrayCell><Svg><path d="M.5 1.500h15v10h-4v3.500l-3.500-3.500H.5zM3 4.500h10M3 6.500h10M3 8.500h7" stroke="#fff" /></Svg></TrayCell>
        <span className="flex w-9 items-center justify-center">РУС</span>
        <span className="flex w-[75px] items-center justify-center text-[11px]">18:15</span>
        <span className="w-[5px] border-l border-[#6f88a0]" />
      </div>
    </footer>
  );
}

export default function App() {
  return (
    <div className="relative flex h-screen flex-col overflow-hidden bg-white font-['Noto_Sans','Open_Sans',sans-serif] text-[11px]">
      <TitleBar />
      <TabRow />
      <Ribbon />
      <AddressRow />
      <main className="flex min-h-0 flex-1">
        <Sidebar />
      </main>
      <StatusBar />
      <Taskbar />
      <div className="absolute right-[193px] top-[657px] flex h-[23px] w-[205px] items-center bg-[#f5fafe] pl-8 text-[#e2e6ea]">
        Весь экран
      </div>
      <IgnitionWindow />
    </div>
  );
}
